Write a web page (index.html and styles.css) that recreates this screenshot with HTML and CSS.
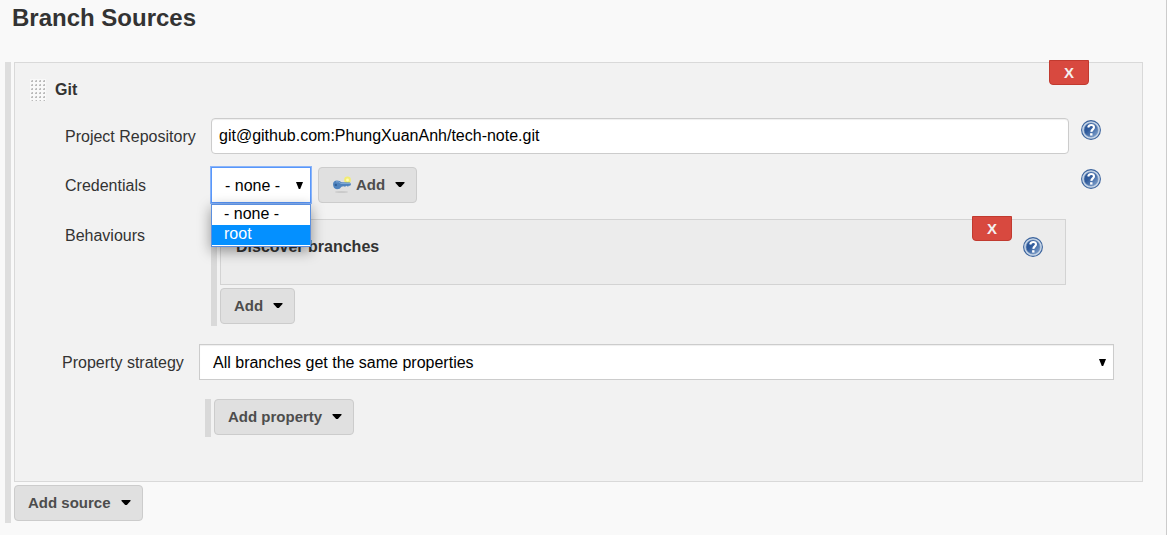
FILE: index.html
```html
<!DOCTYPE html>
<html lang="en">
<head>
<meta charset="utf-8">
<title>Branch Sources</title>
<link rel="stylesheet" href="styles.css">
</head>
<body>
<svg class="defs" aria-hidden="true">
  <defs>
    <linearGradient id="blue" x1="0" y1="0" x2="1" y2="1">
      <stop offset="0" stop-color="#2a5597"/>
      <stop offset="0.4" stop-color="#2f5a9b"/>
      <stop offset="1" stop-color="#8aaad2"/>
    </linearGradient>
    <symbol id="help" viewBox="0 0 20 20">
      <circle cx="10" cy="10" r="9.4" fill="#c9d7e8" stroke="#3c649d" stroke-width="1.1"/>
      <circle cx="10" cy="10" r="7" fill="url(#blue)" stroke="#6c8dbb" stroke-width="0.6"/>
      <path d="M7.200 7.400C7.600 5.600 8.900 5 10.200 5C12 5 13 5.900 13 7.300C13 9.300 10.500 9.400 10.300 11.900" fill="none" stroke="#fff" stroke-width="2.100"/>
      <rect x="9.1" y="13.2" width="2.4" height="2.4" fill="#fff"/>
    </symbol>
    <symbol id="caret" viewBox="0 0 10 6"><path d="M0.500 0H9.500V1L5.800 5H4.200L0.500 1Z"/></symbol>
    <symbol id="arrow" viewBox="0 0 7 7"><path d="M0 0H7L4.2 7H2.8Z"/></symbol>
    <pattern id="dots" width="4" height="4" patternUnits="userSpaceOnUse">
      <path d="M1 3V2H2V1H3V3Z" fill="#bbb"/>
      <path d="M1 1H2V2H1Z" fill="#ddd"/>
    </pattern>
  </defs>
</svg>
<main class="page">
  <h1 class="title">Branch Sources</h1>
  <div class="repeat">
    <section class="source">
      <button class="delete" type="button">X</button>
      <div class="source-head">
        <svg class="grip" aria-hidden="true"><rect width="16" height="22" fill="#f9f9f9"/><rect width="16" height="22" fill="url(#dots)"/></svg>
        <b>Git</b>
      </div>
      <div class="row">
        <label class="label" for="repo">Project Repository</label>
        <input class="text" id="repo" type="text" value="git@github.com:PhungXuanAnh/tech-note.git">
        <a class="help" href="#" aria-label="Help"><svg><use href="#help"/></svg></a>
      </div>
      <div class="row">
        <label class="label" for="cred">Credentials</label>
        <div class="cred">
          <div class="pick">
            <select class="select focused" id="cred"><option>- none -</option><option>root</option></select>
            <svg class="arrow"><use href="#arrow"/></svg>
            <ul class="menu" role="listbox" aria-label="Credentials">
              <li class="option" role="option">- none -</li>
              <li class="option active" role="option" aria-selected="true">root</li>
            </ul>
          </div>
          <button class="button" type="button">
            <svg class="key" viewBox="0 0 20 18" aria-hidden="true">
              <ellipse cx="9.5" cy="16" rx="6.5" ry="1" fill="#cacaca"/>
              <circle cx="15.5" cy="4" r="3.4" fill="#f3ec72"/>
              <circle cx="15.5" cy="4" r="1.4" fill="#fffcb4"/>
              <path d="M1 8Q1.300 4.500 5 4.500Q8 4.500 9.500 6.300L18 6.500L19 8.300L18 10L17 9.600L16 10.800L14.500 9.800L13 10.800L11.500 10.200L9.500 10.800Q8 13.300 5 13.300Q1 12.800 1 8Z" fill="#4f83bd"/>
              <path d="M4 5.800Q7 5.200 9 7.500H18" fill="none" stroke="#7fa8d4" stroke-width="1"/>
              <circle cx="3.800" cy="8.900" r="1.200" fill="#315f97"/>
            </svg>Add<svg class="caret"><use href="#caret"/></svg></button>
        </div>
        <a class="help" href="#" aria-label="Help"><svg><use href="#help"/></svg></a>
      </div>
      <div class="row behaviours">
        <span class="label">Behaviours</span>
        <div class="repeat nested">
          <section class="trait">
            <button class="delete" type="button">X</button>
            <b>Discover branches</b>
            <a class="help" href="#" aria-label="Help"><svg><use href="#help"/></svg></a>
          </section>
          <button class="button" type="button">Add<svg class="caret"><use href="#caret"/></svg></button>
        </div>
      </div>
      <div class="strategy">
        <label class="label" for="strategy">Property strategy</label>
        <div class="pick">
          <select class="select" id="strategy"><option>All branches get the same properties</option></select>
          <svg class="arrow"><use href="#arrow"/></svg>
        </div>
        <div class="repeat props">
          <button class="button" type="button">Add property<svg class="caret"><use href="#caret"/></svg></button>
        </div>
      </div>
    </section>
    <button class="button" type="button">Add source<svg class="caret"><use href="#caret"/></svg></button>
  </div>
</main>
</body>
</html>
```
FILE: styles.css
```css
* { box-sizing: border-box; }
body {
  margin: 0;
  background: #fff;
  color: #333;
  font: 16px/20px "Liberation Sans", Arial, sans-serif;
}
.defs { position: absolute; width: 0; height: 0; }
.page {
  min-height: 100vh;
  margin-right: 7px;
  padding: 4px 23px 12px 5px;
  border-right: 1px solid #ccc;
  background: #f9f9f9;
}
.title {
  margin: 0 0 30px 7px;
  font-size: 24px;
  line-height: 28px;
}
.repeat {
  display: flex;
  flex-direction: column;
  align-items: flex-start;
  gap: 3px;
  padding: 0 0 2px 3px;
  border-left: 6px solid #dedede;
}
.source {
  position: relative;
  align-self: stretch;
  padding: 16px 28px 44px 15px;
  border: 1px solid #d9d9d9;
  background: #f2f2f2;
}
.delete {
  position: absolute;
  top: -3px;
  right: 53px;
  width: 40px;
  height: 25px;
  padding: 0;
  border: 1px solid #c13a2f;
  border-radius: 0 0 4px 4px;
  background: #d8493f;
  color: #f4f0f0;
  font: bold 15px/23px "Liberation Sans", Arial, sans-serif;
}
.source-head {
  display: flex;
  align-items: center;
  gap: 9px;
  margin-bottom: 17px;
}
.grip { width: 16px; height: 22px; }
.row {
  display: grid;
  grid-template-columns: 146px 1fr 20px;
  margin: 0 13px 13px 35px;
}
.label { padding-top: 9px; }
.text {
  width: 100%;
  height: 36px;
  padding: 0 7px;
  border: 1px solid #ccc;
  border-radius: 4px;
  background: #fff;
  box-shadow: inset 0 1px 1px #0001;
  color: #000;
  font: inherit;
}
.row > .text { width: auto; margin-right: 12px; }
.help { margin-top: 2px; height: 20px; }
.help svg { display: block; width: 20px; height: 20px; }
.cred { display: flex; gap: 7px; }
.pick { position: relative; }
.select {
  display: block;
  width: 100%;
  height: 36px;
  padding: 1px 30px 0 13px;
  border: 1px solid #ccc;
  border-radius: 0;
  outline: 0;
  appearance: none;
  background: #fff;
  box-shadow: inset 0 1px 1px #0001;
  color: #000;
  font: inherit;
}
.focused { border-color: #5897fb; box-shadow: 0 0 0 1px #8ab4f8; }
.cred .pick { width: 100px; }
.arrow {
  position: absolute;
  top: 15px;
  right: 8px;
  width: 7px;
  height: 7px;
  pointer-events: none;
}
.menu {
  position: absolute;
  z-index: 2;
  top: 37px;
  left: 0;
  width: 100%;
  margin: 0;
  padding: 0 0 1px;
  border: 1px solid #5a8fdf;
  background: #fff;
  box-shadow: 0 4px 14px #0006;
  color: #000;
  list-style: none;
}
.option { height: 20px; padding-left: 12px; line-height: 18px; }
.active { background: #0490ff; color: #fff; }
.button {
  display: flex;
  align-items: center;
  height: 36px;
  padding: 0 11px 0 13px;
  border: 1px solid #ccc;
  border-radius: 4px;
  background: #e0e0e0;
  color: #4d4d4d;
  font: bold 15px/20px "Liberation Sans", Arial, sans-serif;
}
.caret { width: 10px; height: 6px; margin-left: 10px; fill: #000; }
.key { width: 20px; height: 18px; margin-right: 4px; }
.behaviours { margin: 16px 13px 18px 35px; }
.behaviours .label { padding-top: 7px; }
.nested { gap: 3px; margin-right: 15px; border-color: #d9d9d9; }
.trait {
  position: relative;
  display: flex;
  align-self: stretch;
  justify-content: space-between;
  min-height: 66px;
  padding: 17px 22px 16px 15px;
  border: 1px solid #d3d3d3;
  background: #ececec;
}
.trait .delete { top: -4px; }
.trait .help { margin-top: 0; }
.strategy {
  display: grid;
  grid-template-columns: 137px 1fr;
  row-gap: 19px;
  margin-left: 32px;
}
.strategy .label { padding-top: 9px; }
.props { grid-column: 2; margin-left: 6px; border-color: #d9d9d9; }
```
